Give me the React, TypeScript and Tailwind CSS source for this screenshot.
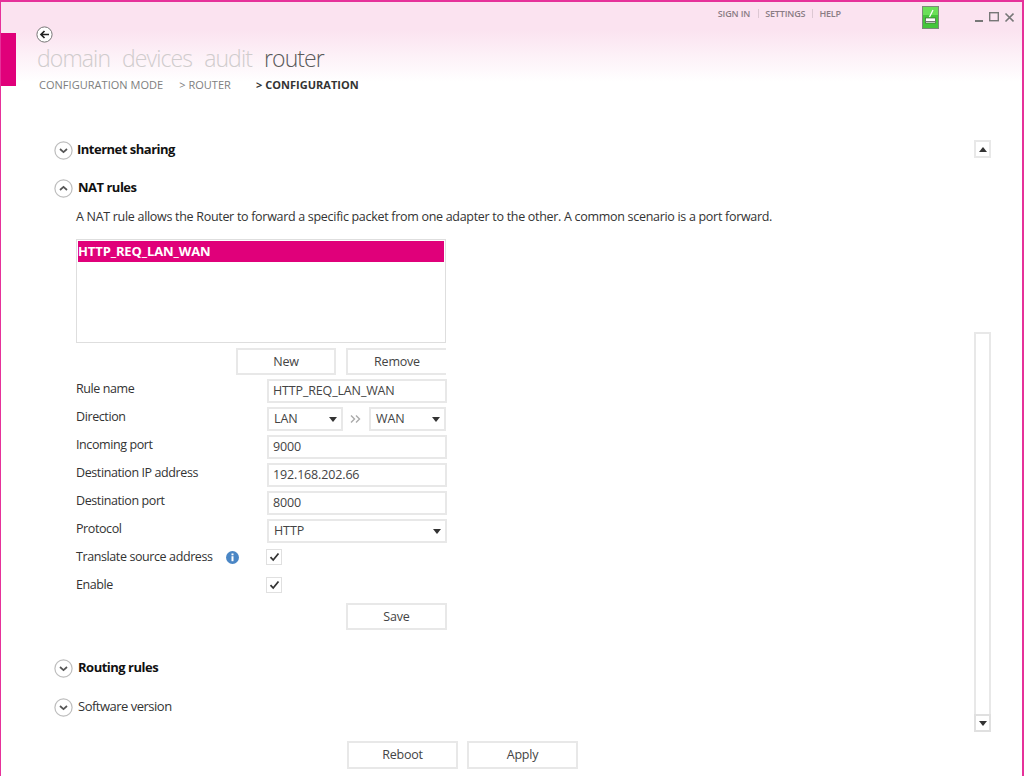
import React from "react";

const F = "[font-family:'Open_Sans','Noto_Sans',sans-serif]";

function Circle({ up, className = "" }: { up?: boolean; className?: string }) {
  return (
    <svg width="19" height="19" viewBox="0 0 19 19" className={"shrink-0 " + className}>
      <circle cx="9.5" cy="9.5" r="8.6" fill="#fff" stroke="#bdbdbd" strokeWidth="1.2" />
      <path d={up ? "M6 11 L9.5 7.8 L13 11" : "M6 8 L9.5 11.2 L13 8"} fill="none" stroke="#555" strokeWidth="1.7" />
    </svg>
  );
}

function Caret({ className = "" }: { className?: string }) {
  return (
    <svg width="8" height="5" viewBox="0 0 8 5" className={"shrink-0 " + className}>
      <path d="M0 0 H8 L4 5 Z" fill="#333" />
    </svg>
  );
}

function Section({ title, up, bold = true, className = "", textClass = "ml-[5px]" }: { title: string; up?: boolean; bold?: boolean; className?: string; textClass?: string }) {
  return (
    <div className={"flex items-center h-[20px] " + className}>
      <Circle up={up} />
      <span className={"text-[13px] " + textClass + " " + (bold ? "font-bold tracking-[-0.5px] text-[#111]" : "tracking-[-0.5px] text-[#333]")}>{title}</span>
    </div>
  );
}

function Label({ children }: { children: React.ReactNode }) {
  return <div className="h-[28px] text-[12.5px] leading-[18px] text-[#333] tracking-[-0.4px] pt-[1px] flex items-start">{children}</div>;
}

function Input({ value }: { value: string }) {
  return (
    <div className="h-[24px] w-[180px] border-2 border-[#e8e8e8] bg-white px-[4px] pt-[1px] flex items-center text-[12.5px] text-[#444] tracking-[-0.15px]">
      {value}
    </div>
  );
}

function Select({ value, w }: { value: string; w: string }) {
  return (
    <div className={"h-[24px] border-2 border-[#e8e8e8] bg-white pl-[5px] pr-[4px] pt-[1px] flex items-center justify-between text-[12.5px] text-[#444] tracking-[-0.1px] " + w}>
      <span>{value}</span>
      <Caret />
    </div>
  );
}

function Check() {
  return (
    <div className="w-[16px] h-[16px] ml-[-1px] border border-[#e0e0e0] bg-white flex items-center justify-center">
      <svg width="11" height="10" viewBox="0 0 11 10">
        <path d="M1.5 5.2 L4.2 8 L9.5 1.5" fill="none" stroke="#333" strokeWidth="1.8" />
      </svg>
    </div>
  );
}

function Btn({ children, w, h = "h-[27px]", className = "" }: { children: React.ReactNode; w: string; h?: string; className?: string }) {
  return (
    <div className={"border-2 border-[#e8e8e8] bg-white flex items-center justify-center text-[12.5px] text-[#444] tracking-[-0.2px] " + w + " " + h + " " + className}>
      {children}
    </div>
  );
}

export default function App() {
  return (
    <div className={"relative w-[1024px] h-[776px] overflow-hidden border-t-2 border-l border-r-2 border-[#e6319a] bg-white flex flex-col " + F}>
      <div className="absolute left-0 top-[31px] w-[15px] h-[53px] bg-[#e0007a]" />
      {/* header */}
      <div className="h-[138px] shrink-0 bg-[linear-gradient(to_bottom,#fbe3f0_0px,#fbe3f0_28px,#ffffff_80px)] flex flex-col">
        <div className="h-[30px] shrink-0 flex justify-end items-start">
          <div className="flex items-center text-[9px] font-semibold text-[#8a7c84] mt-[6px] tracking-[-0.15px] leading-[11px]">
            <span>SIGN IN</span>
            <span className="w-px h-[9px] bg-[#ddc8d3] ml-[8px] mr-[6px]" />
            <span>SETTINGS</span>
            <span className="w-px h-[9px] bg-[#ddc8d3] ml-[7px] mr-[6px]" />
            <span>HELP</span>
          </div>
          <svg width="17" height="23" viewBox="0 0 17 23" className="ml-[81px] mt-[4px] shrink-0">
            <rect x="0.5" y="0.5" width="16" height="22" fill="#44c53a" stroke="#7b8a78" />
            <rect x="1" y="1" width="15" height="8" fill="#6adf58" />
            <path d="M7.5 11 L11 4" stroke="#fff" strokeWidth="1.2" />
            <rect x="3.5" y="12" width="10" height="5" fill="#fff" stroke="#3a6a35" strokeWidth="0.7" />
            <rect x="3.5" y="15" width="10" height="1" fill="#777" />
          </svg>
          <svg width="39" height="12" viewBox="0 0 39 12" className="ml-[36px] mt-[10px] mr-[8px] shrink-0">
            <rect x="0" y="8" width="8" height="2" fill="#777" />
            <rect x="14.7" y="0.7" width="8.6" height="8" fill="none" stroke="#777" strokeWidth="1.4" />
            <path d="M30.5 1.5 L38.5 9.5 M38.5 1.5 L30.5 9.5" stroke="#777" strokeWidth="1.6" />
          </svg>
        </div>
        <div className="ml-[35px] h-[10px]">
          <svg width="17" height="17" viewBox="0 0 17 17" className="mt-[-6px]">
            <circle cx="8.5" cy="8.5" r="7.6" fill="#fff" stroke="#777" strokeWidth="1" />
            <path d="M13 8.5 H5 M8.5 5 L5 8.5 L8.5 12" fill="none" stroke="#222" strokeWidth="1.7" />
          </svg>
        </div>
        <div className="ml-[36px] flex items-baseline text-[23px] font-light leading-[32px] text-[#d0cccd] h-[32px] tracking-[-0.9px]">
          <span>domain</span>
          <span className="ml-[12px]">devices</span>
          <span className="ml-[12px]">audit</span>
          <span className="ml-[12px] text-[#5a5a5a]">router</span>
        </div>
        <div className="ml-[38px] mt-[3px] flex items-center text-[11px] leading-[16px] text-[#7e7e7e] tracking-[0.03px]">
          <span>CONFIGURATION MODE</span>
          <span className="ml-[16px]">&gt; ROUTER</span>
          <span className="ml-[25px] font-bold text-[#333]">&gt; CONFIGURATION</span>
        </div>
      </div>

      {/* body */}
      <div className="flex-1 flex min-h-0">
        <div className="flex-1 pl-[75px] flex flex-col">
          <Section title="Internet sharing" className="ml-[-22px]" textClass="ml-[4px]" />
          <Section title="NAT rules" up className="ml-[-22px] mt-[18px]" />
          <div className="mt-[9px] h-[20px] text-[12.5px] leading-[20px] text-[#333] tracking-[-0.3px] whitespace-nowrap">
            A NAT rule allows the Router to forward a specific packet from one adapter to the other. A common scenario is a port forward.
          </div>
          <div className="mt-[12px] w-[370px] h-[104px] border border-[#dedede] bg-white p-px">
            <div className="h-[21px] bg-[#e0007a] text-white font-bold text-[13px] leading-[21px] tracking-[-0.12px]">HTTP_REQ_LAN_WAN</div>
          </div>
          <div className="w-[370px] mt-[5px] flex justify-end gap-[10px]">
            <Btn w="w-[100px]" className="pt-[1px]">New</Btn>
            <Btn w="w-[100px]" className="border-r-0 pt-[1px]">Remove</Btn>
          </div>
          <div className="mt-[4px] w-[370px] grid grid-cols-[191px_179px] auto-rows-[28px] overflow-visible">
            <Label>Rule name</Label>
            <Input value="HTTP_REQ_LAN_WAN" />
            <Label>Direction</Label>
            <div className="flex items-start w-[180px]">
              <Select value="LAN" w="w-[76px]" />
              <svg width="26" height="24" viewBox="0 0 26 24" className="shrink-0">
                <path d="M8 8.5 L11.5 12 L8 15.5 M13 8.5 L16.5 12 L13 15.5" fill="none" stroke="#aaa" strokeWidth="1.4" />
              </svg>
              <Select value="WAN" w="w-[77px]" />
            </div>
            <Label>Incoming port</Label>
            <Input value="9000" />
            <Label>Destination IP address</Label>
            <Input value="192.168.202.66" />
            <Label>Destination port</Label>
            <Input value="8000" />
            <Label>Protocol</Label>
            <Select value="HTTP" w="w-[180px]" />
            <div className="relative">
              <Label>Translate source address</Label>
              <svg width="13" height="13" viewBox="0 0 13 13" className="absolute left-[150px] top-[4px]">
                <circle cx="6.5" cy="6.5" r="6.5" fill="#4a86c5" />
                <rect x="5.5" y="5.2" width="2" height="5" fill="#fff" />
                <rect x="5.5" y="2.5" width="2" height="1.8" fill="#fff" />
              </svg>
            </div>
            <div className="pt-[2px]"><Check /></div>
            <Label>Enable</Label>
            <div className="pt-[2px]"><Check /></div>
          </div>
          <div className="w-[371px] flex justify-end">
            <Btn w="w-[101px]" className="pt-[1px]">Save</Btn>
          </div>
          <Section title="Routing rules" className="ml-[-22px] mt-[28px]" />
          <Section title="Software version" bold={false} className="ml-[-22px] mt-[19px]" />
          <div className="ml-[271px] mt-[24px] flex gap-[9px]">
            <Btn w="w-[111px]" h="h-[28px]">Reboot</Btn>
            <Btn w="w-[111px]" h="h-[28px]">Apply</Btn>
          </div>
        </div>
        {/* scrollbar */}
        <div className="w-[17px] mr-[31px] shrink-0 flex flex-col">
          <div className="h-[18px] border-2 border-[#e8e8e8] flex items-center justify-center">
            <Caret className="rotate-180" />
          </div>
          <div className="h-[174px]" />
          <div className="h-[382px] border-2 border-b-0 border-[#e8e8e8]" />
          <div className="h-[18px] border-2 border-[#e0e0e0] flex items-center justify-center">
            <Caret />
          </div>
        </div>
      </div>
    </div>
  );
}
